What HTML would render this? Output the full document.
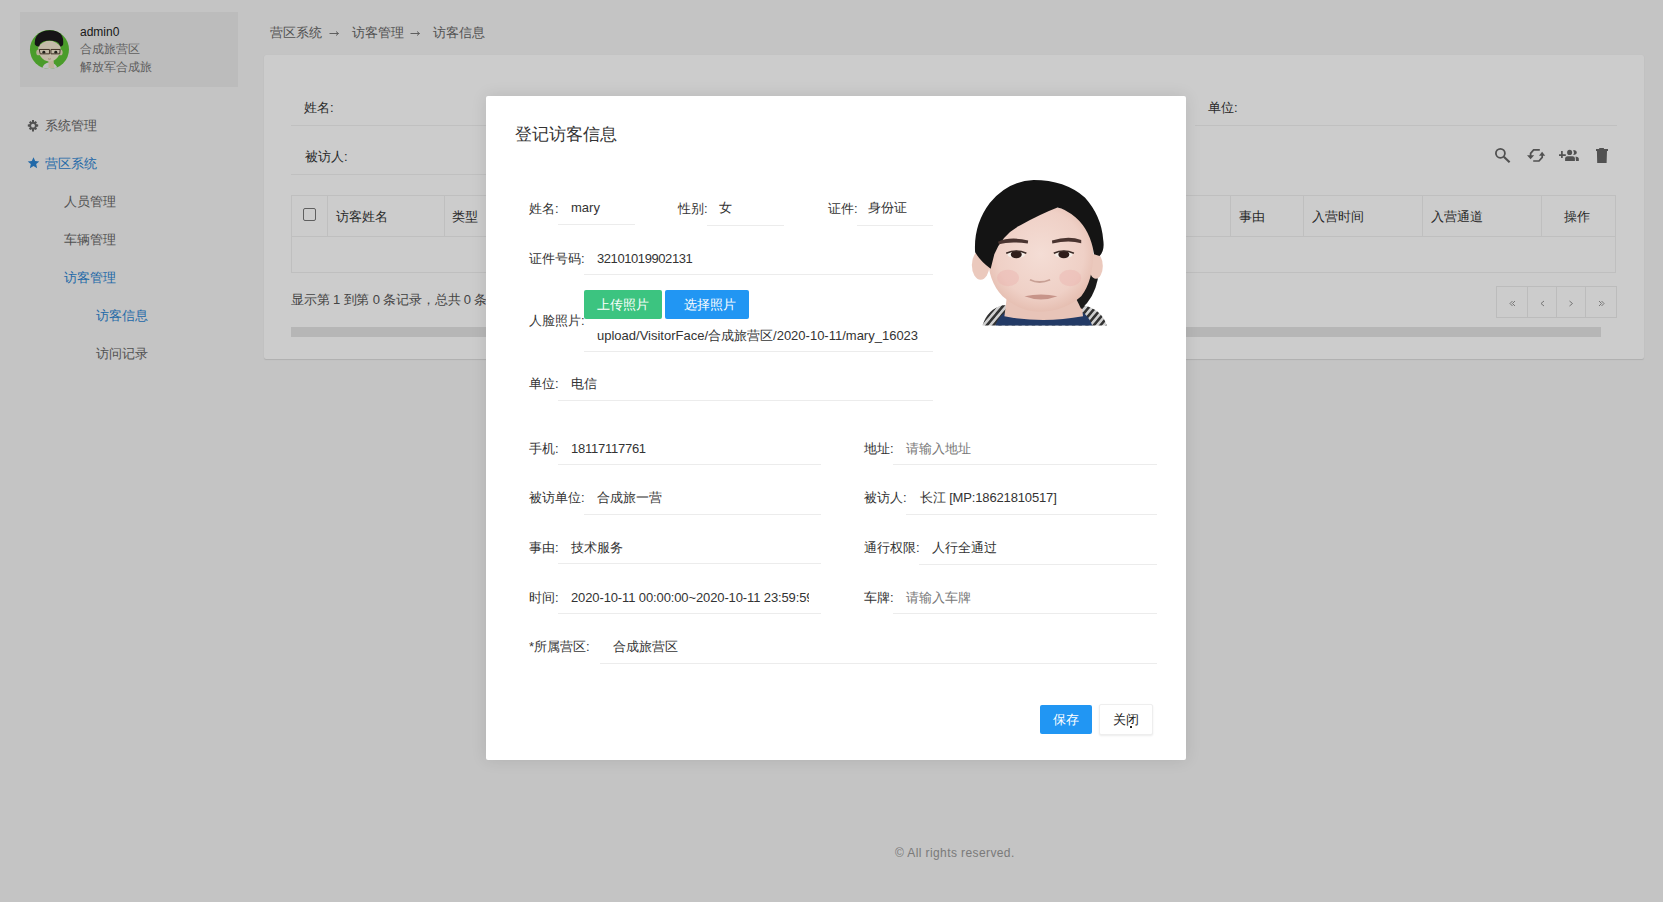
<!DOCTYPE html>
<html><head><meta charset="utf-8">
<style>
*{margin:0;padding:0;box-sizing:border-box}
html,body{width:1663px;height:902px;overflow:hidden}
body{background:#f5f5f5;font-family:"Liberation Sans",sans-serif;font-size:13px;color:#333;position:relative}
.a{position:absolute;white-space:nowrap}
.t{line-height:1}
#userbox{left:20px;top:12px;width:218px;height:75px;background:#ececec}
#panel{left:264px;top:55px;width:1380px;height:304px;background:#fff;border-radius:2px;box-shadow:0 1px 1px rgba(0,0,0,.1),0 0 1px rgba(0,0,0,.06)}
.menu{font-size:13px;color:#666}
.blue{color:#2a84d2}
.uline{position:absolute;height:1px;background:#f0f0f0}
#overlay{left:0;top:0;width:1663px;height:902px;background:rgba(0,0,0,.2)}
#modal{left:486px;top:96px;width:700px;height:664px;background:#fff;border-radius:2px;box-shadow:0 0 16px rgba(0,0,0,.1)}
.lbl{font-size:13px;color:#333}
.val{font-size:13px;color:#333}
.ph{color:#777}
.ml{position:absolute;height:1px;background:#ececec}
.th{position:absolute;top:0;height:41px;border-left:1px solid #efefef}
</style></head>
<body>
<!-- sidebar -->
<div class="a" id="userbox"></div>
<svg class="a" style="left:28px;top:28px" width="44" height="44" viewBox="0 0 902 902">
<defs><clipPath id="cc"><circle cx="440" cy="440" r="400"/></clipPath></defs>
<circle cx="440" cy="440" r="400" fill="#5dc435"/>
<g clip-path="url(#cc)">
<path d="M270 902 Q290 720 440 700 Q600 720 640 902Z" fill="#f0f0f0"/>
<path d="M420 620 L520 620 L540 820 L420 820Z" fill="#efe0c4"/>
<ellipse cx="215" cy="500" rx="45" ry="60" fill="#eadbbd"/>
<ellipse cx="665" cy="500" rx="45" ry="60" fill="#eadbbd"/>
<path d="M210 380 Q210 660 440 690 Q670 660 670 380 Q560 260 440 260 Q320 260 210 380Z" fill="#f4ead2"/>
<path d="M140 340 Q120 140 300 70 Q450 20 610 70 Q740 140 720 340 Q700 390 660 380 Q640 290 550 270 Q440 240 330 270 Q240 300 230 380 Q170 390 140 340Z" fill="#1c1a1c"/>
<path d="M230 440 H440 V530 H250Z M470 440 H660 L650 530 H470Z" fill="none" stroke="#4a3a2a" stroke-width="20"/>
<circle cx="325" cy="495" r="30" fill="#2a2a22"/>
<circle cx="570" cy="495" r="30" fill="#2a2a22"/>
<path d="M410 630 Q440 650 470 630" stroke="#b89a80" stroke-width="14" fill="none"/>
</g>
</svg>
<div class="a t" style="left:80px;top:26px;font-size:12px;color:#222">admin0</div>
<div class="a t" style="left:80px;top:43px;font-size:12px;color:#777">合成旅营区</div>
<div class="a t" style="left:80px;top:61px;font-size:12px;color:#777">解放军合成旅</div>

<svg class="a" style="left:27px;top:120px" width="12" height="12" viewBox="0 0 12 12"><path d="M5 0H7V2.2L8.6 1.1 10 2.6 8.8 4.1 11.2 4.5V6.5L9 7 10.1 8.7 8.6 10.1 7 9.2V11.4H5V9.2L3.4 10.1 1.9 8.7 3 7 0.8 6.5V4.5L3.2 4.1 2 2.6 3.4 1.1 5 2.2Z" fill="#666"/><circle cx="6" cy="5.7" r="1.9" fill="#f5f5f5"/></svg>
<div class="a t menu" style="left:45px;top:119px">系统管理</div>
<svg class="a" style="left:27px;top:157px" width="13" height="12" viewBox="0 0 13 12"><path d="M6.5 0.3l1.7 3.7 4.1.4-3.1 2.7.9 4.1-3.6-2.2-3.6 2.2.9-4.1-3.1-2.7 4.1-.4z" fill="#2a84d2"/></svg>
<div class="a t menu blue" style="left:45px;top:157px">营区系统</div>
<div class="a t menu" style="left:64px;top:195px">人员管理</div>
<div class="a t menu" style="left:64px;top:233px">车辆管理</div>
<div class="a t menu blue" style="left:64px;top:271px">访客管理</div>
<div class="a t menu blue" style="left:96px;top:309px">访客信息</div>
<div class="a t menu" style="left:96px;top:347px">访问记录</div>

<!-- breadcrumb -->
<div class="a t" style="left:270px;top:26px;font-size:13px;color:#666">营区系统</div>
<div class="a t" style="left:352px;top:26px;font-size:13px;color:#666">访客管理</div>
<div class="a t" style="left:433px;top:26px;font-size:13px;color:#666">访客信息</div>
<svg class="a" style="left:328px;top:28px" width="100" height="10" viewBox="0 0 100 10"><g fill="none" stroke="#777" stroke-width="1"><path d="M1.5 5.5H10.5M8 3.5L10.5 5.5L8 7.5"/><path d="M82.5 5.5H91.5M89 3.5L91.5 5.5L89 7.5"/></g></svg>

<!-- panel -->
<div class="a" id="panel"></div>
<div class="a t lbl" style="left:304px;top:101px">姓名:</div>
<div class="uline" style="left:291px;top:125px;width:422px"></div>
<div class="uline" style="left:743px;top:125px;width:422px"></div>
<div class="uline" style="left:1195px;top:125px;width:422px"></div>
<div class="a t lbl" style="left:1208px;top:101px">单位:</div>
<div class="a t lbl" style="left:305px;top:150px">被访人:</div>
<div class="uline" style="left:291px;top:174px;width:422px"></div>

<!-- toolbar icons -->
<svg class="a" style="left:1490px;top:140px" width="30" height="30" viewBox="0 0 30 30"><circle cx="10.4" cy="13.3" r="4.5" fill="none" stroke="#666" stroke-width="1.8"/><path d="M13.8 16.8L19.6 22.2" stroke="#666" stroke-width="2.2"/></svg>
<svg class="a" style="left:1520px;top:140px" width="35" height="30" viewBox="0 0 35 30"><path d="M19.8 9.9H13.6L10.6 13.4V16" fill="none" stroke="#666" stroke-width="1.7"/><path d="M7 15.3H14.2L10.6 19.2Z" fill="#666"/><path d="M13.2 21H19L22.2 17.4V15" fill="none" stroke="#666" stroke-width="1.7"/><path d="M19 15.7H25.2L22.1 11.8Z" fill="#666"/></svg>
<svg class="a" style="left:1555px;top:140px" width="60" height="30" viewBox="0 0 60 30"><path d="M4 15.1H10.8M6.9 11V17.9" stroke="#666" stroke-width="1.7"/><ellipse cx="14.6" cy="12.4" rx="2.5" ry="2.6" fill="#666"/><path d="M10.1 21V18.2Q10.3 16.2 12.5 16.2H17.5Q19.9 16.2 19.9 18.2V21Z" fill="#666"/><path d="M18.2 9.9Q21.8 10.2 21.8 12.4Q21.8 14.6 18.2 14.9Q19.6 12.4 18.2 9.9Z" fill="#666"/><path d="M20.6 16.5Q23.8 17 23.8 18.5V21H21Z" fill="#666"/><path d="M44.2 8.1H48.9V9.2H44.2Z M41 9H53V10.9H41Z M41.9 10.8H52L51.6 22.9H42.2Z" fill="#666"/></svg>

<!-- table -->
<div class="a" style="left:291px;top:195px;width:1325px;height:78px;border:1px solid #efefef">
  <div class="a" style="left:0;top:0;width:1323px;height:41px;border-bottom:1px solid #efefef"></div>
  <div class="th" style="left:35px"></div>
  <div class="th" style="left:152px"></div>
  <div class="th" style="left:938px"></div>
  <div class="th" style="left:1011px"></div>
  <div class="th" style="left:1130px"></div>
  <div class="th" style="left:1249px"></div>
</div>
<div class="a" style="left:303px;top:208px;width:13px;height:13px;border:1px solid #777;border-radius:2px;background:#fff"></div>
<div class="a t lbl" style="left:336px;top:210px">访客姓名</div>
<div class="a t lbl" style="left:452px;top:210px">类型</div>
<div class="a t lbl" style="left:1239px;top:210px">事由</div>
<div class="a t lbl" style="left:1312px;top:210px">入营时间</div>
<div class="a t lbl" style="left:1431px;top:210px">入营通道</div>
<div class="a t lbl" style="left:1564px;top:210px">操作</div>
<div class="a t" style="left:291px;top:293px;font-size:13px;color:#555;letter-spacing:-0.15px">显示第 1 到第 0 条记录，总共 0 条记录</div>
<!-- pagination -->
<div class="a" style="left:1496px;top:286px;width:121px;height:32px;border:1px solid #ececec"></div>
<div class="a" style="left:1527px;top:286px;width:1px;height:32px;background:#ececec"></div>
<div class="a" style="left:1556px;top:286px;width:1px;height:32px;background:#ececec"></div>
<div class="a" style="left:1585px;top:286px;width:1px;height:32px;background:#ececec"></div>
<svg class="a" style="left:1496px;top:286px" width="121" height="32" viewBox="0 0 121 32"><g fill="none" stroke="#888" stroke-width="0.9"><path d="M16.5 15L14 17.5L16.5 20M19 15L16.5 17.5L19 20"/><path d="M48 15L45 17.5L48 20"/><path d="M73.5 15L76.5 17.5L73.5 20"/><path d="M103 15L105.5 17.5L103 20M105.5 15L108 17.5L105.5 20"/></g></svg>
<div class="a" style="left:291px;top:327px;width:1310px;height:10px;background:#e4e4e4"></div>
<!-- footer -->
<div class="a t" style="left:895px;top:847px;font-size:12px;color:#999;letter-spacing:0.4px">© All rights reserved.</div>
<!-- overlay -->
<div class="a" id="overlay"></div>

<!-- modal -->
<div class="a" id="modal"></div>
<div class="a t" style="left:515px;top:126px;font-size:17px;color:#333">登记访客信息</div>
<!-- row1 -->
<div class="a t lbl" style="left:529px;top:202px">姓名:</div>
<div class="a t val" style="left:571px;top:201px">mary</div>
<div class="ml" style="left:558px;top:224px;width:77px"></div>
<div class="a t lbl" style="left:678px;top:202px">性别:</div>
<div class="a t val" style="left:719px;top:201px">女</div>
<div class="ml" style="left:707px;top:225px;width:77px"></div>
<div class="a t lbl" style="left:828px;top:202px">证件:</div>
<div class="a t val" style="left:868px;top:201px">身份证</div>
<div class="ml" style="left:857px;top:225px;width:76px"></div>
<!-- row2 -->
<div class="a t lbl" style="left:529px;top:252px">证件号码:</div>
<div class="a t val" style="left:597px;top:252px;letter-spacing:-0.42px">32101019902131</div>
<div class="ml" style="left:584px;top:274px;width:349px"></div>
<!-- row3 -->
<div class="a" style="left:584px;top:290px;width:78px;height:29px;background:#3cc480;border-radius:2px;color:#fff;font-size:13px;line-height:29px;text-align:center">上传照片</div>
<div class="a" style="left:665px;top:290px;width:84px;height:29px;background:#2196f3;border-radius:2px;color:#fff;font-size:13px;line-height:29px;text-align:center;padding-left:5px">选择照片</div>
<div class="a t lbl" style="left:529px;top:314px">人脸照片:</div>
<div class="a t val" style="left:597px;top:329px">upload/VisitorFace/合成旅营区/2020-10-11/mary_16023</div>
<div class="ml" style="left:584px;top:351px;width:349px"></div>
<!-- row4 -->
<div class="a t lbl" style="left:529px;top:377px">单位:</div>
<div class="a t val" style="left:571px;top:377px">电信</div>
<div class="ml" style="left:558px;top:400px;width:375px"></div>
<!-- photo -->
<svg class="a" style="left:955px;top:170px" width="165" height="165" viewBox="0 0 902 902">
<defs>
<radialGradient id="sk" cx="50%" cy="45%" r="55%"><stop offset="0" stop-color="#f4ddd5"/><stop offset="0.75" stop-color="#efd0c6"/><stop offset="1" stop-color="#e6bfb2"/></radialGradient>
<pattern id="st" width="28" height="28" patternUnits="userSpaceOnUse" patternTransform="rotate(40)"><rect width="28" height="28" fill="#cfcfcf"/><rect width="14" height="28" fill="#333"/></pattern>
</defs>
<rect x="0" y="0" width="902" height="902" fill="#fff"/>
<path d="M150 850 Q180 760 260 740 L700 740 Q800 760 830 850Z" fill="url(#st)"/>
<path d="M220 850 Q250 770 330 760 L650 760 Q720 770 750 850Z" fill="#233a66"/>
<path d="M290 640 L680 640 L700 800 Q480 840 270 800Z" fill="#e8c4b8"/>
<path d="M700 560 Q790 520 780 600 Q760 700 690 760 L660 700Z" fill="#1a1a1a"/>
<ellipse cx="140" cy="520" rx="48" ry="80" fill="#ebc9bd"/>
<ellipse cx="770" cy="525" rx="38" ry="70" fill="#ebc9bd"/>
<path d="M180 420 Q170 600 260 690 Q360 780 470 775 Q600 770 690 690 Q760 600 755 430 Q740 290 620 220 Q470 170 330 240 Q190 310 180 420Z" fill="url(#sk)"/>
<path d="M110 450 Q100 300 190 180 Q290 60 430 55 Q600 55 710 150 Q800 250 810 380 Q820 440 790 470 L760 460 Q740 330 660 260 Q600 210 560 205 Q470 240 360 300 Q260 350 215 460 L195 540 Q140 500 110 450Z" fill="#141414"/>
<path d="M235 392 Q300 362 400 385 L398 402 Q300 388 240 406Z" fill="#4a3430"/>
<path d="M530 385 Q620 358 690 382 L690 400 Q620 382 532 402Z" fill="#4a3430"/>
<ellipse cx="335" cy="462" rx="48" ry="20" fill="#f5eee8"/>
<ellipse cx="595" cy="462" rx="48" ry="20" fill="#f5eee8"/>
<ellipse cx="335" cy="462" rx="30" ry="21" fill="#2e1d1a"/>
<ellipse cx="595" cy="462" rx="30" ry="21" fill="#2e1d1a"/>
<path d="M280 455 Q335 430 390 455" stroke="#3a2a26" stroke-width="8" fill="none"/>
<path d="M540 455 Q595 430 650 455" stroke="#3a2a26" stroke-width="8" fill="none"/>
<path d="M410 600 Q460 625 520 600" stroke="#c8a095" stroke-width="10" fill="none"/>
<path d="M380 690 Q470 670 560 690 Q470 725 380 690Z" fill="#c79489"/>
<ellipse cx="290" cy="590" rx="60" ry="45" fill="#eab3b0" opacity=".45"/>
<ellipse cx="630" cy="590" rx="60" ry="45" fill="#eab3b0" opacity=".45"/>
</svg>
<!-- row5 -->
<div class="a t lbl" style="left:529px;top:442px">手机:</div>
<div class="a t val" style="left:571px;top:442px;letter-spacing:-0.25px">18117117761</div>
<div class="ml" style="left:558px;top:464px;width:263px"></div>
<div class="a t lbl" style="left:864px;top:442px">地址:</div>
<div class="a t val ph" style="left:906px;top:442px">请输入地址</div>
<div class="ml" style="left:893px;top:464px;width:264px"></div>
<!-- row6 -->
<div class="a t lbl" style="left:529px;top:491px">被访单位:</div>
<div class="a t val" style="left:597px;top:491px">合成旅一营</div>
<div class="ml" style="left:584px;top:514px;width:237px"></div>
<div class="a t lbl" style="left:864px;top:491px">被访人:</div>
<div class="a t val" style="left:920px;top:491px;letter-spacing:-0.15px">长江 [MP:18621810517]</div>
<div class="ml" style="left:906px;top:514px;width:251px"></div>
<!-- row7 -->
<div class="a t lbl" style="left:529px;top:541px">事由:</div>
<div class="a t val" style="left:571px;top:541px">技术服务</div>
<div class="ml" style="left:558px;top:563px;width:263px"></div>
<div class="a t lbl" style="left:864px;top:541px">通行权限:</div>
<div class="a t val" style="left:932px;top:541px">人行全通过</div>
<div class="ml" style="left:919px;top:564px;width:238px"></div>
<!-- row8 -->
<div class="a t lbl" style="left:529px;top:591px">时间:</div>
<div class="a val" style="left:571px;top:590px;width:238px;height:18px;line-height:16px;overflow:hidden;letter-spacing:-0.12px">2020-10-11 00:00:00~2020-10-11 23:59:59</div>
<div class="ml" style="left:558px;top:613px;width:263px"></div>
<div class="a t lbl" style="left:864px;top:591px">车牌:</div>
<div class="a t val ph" style="left:906px;top:591px">请输入车牌</div>
<div class="ml" style="left:893px;top:613px;width:264px"></div>
<!-- row9 -->
<div class="a t lbl" style="left:529px;top:640px">*所属营区:</div>
<div class="a t val" style="left:613px;top:640px">合成旅营区</div>
<div class="ml" style="left:600px;top:663px;width:557px"></div>
<!-- footer buttons -->
<div class="a" style="left:1040px;top:705px;width:52px;height:29px;background:#2196f3;border-radius:2px;color:#fff;font-size:13px;line-height:29px;text-align:center">保存</div>
<div class="a" style="left:1099px;top:704px;width:54px;height:31px;background:#fff;border:1px solid #eee;box-shadow:0 1px 2px rgba(0,0,0,.08);border-radius:2px;color:#222;font-size:13px;line-height:29px;text-align:center">关闭</div>
<div class="a" style="left:1130px;top:726px;width:2px;height:2px;background:#222"></div>
</body></html>
